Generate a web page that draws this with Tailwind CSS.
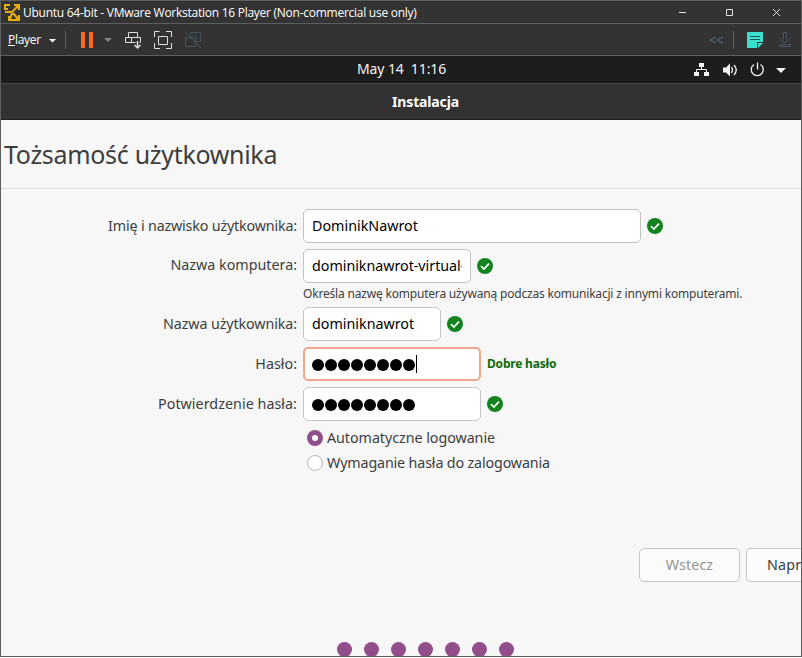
<!DOCTYPE html>
<html lang="pl">
<head>
<meta charset="utf-8">
<title>Instalacja</title>
<script src="https://cdn.jsdelivr.net/npm/@tailwindcss/browser@4"></script>
</head>
<body class="w-[802px] h-[658px] overflow-hidden bg-[#f7f7f7]">
<svg class="hidden">
  <symbol id="ok" viewBox="0 0 16 16"><circle cx="8" cy="8" r="8" fill="#12831f"/><path d="M4 8.2 6.9 11 12 5.600" fill="none" stroke="#fff" stroke-width="1.700"/></symbol>
</svg>
<div class="w-[802px] h-[657px] flex flex-col border border-[#5c5e60] overflow-hidden font-['Noto_Sans','Open_Sans',sans-serif] text-[#3d3d3d]">

  <header class="h-[22px] shrink-0 flex items-center bg-[#333333] text-white">
    <svg class="ml-[3px] mt-px w-4 h-[17px] shrink-0" viewBox="0 0 16 17" fill="none" stroke="#e8ae10" stroke-width="2">
      <path d="M1 6V1h5M10 1h5v5M15 11v5h-5M5 12v4h5M1 5l3 0M8 8l6-6M9 9l5 6M8 9l-2 6M1 8h7"/>
    </svg>
    <span class="ml-[3px] mt-px whitespace-nowrap font-['Open_Sans'] text-[12px] leading-[16px] tracking-[-0.26px]">Ubuntu 64-bit - VMware Workstation 16 Player (Non-commercial use only)</span>
    <svg class="ml-auto mr-[19px] w-[104px] h-[10px] shrink-0" viewBox="0 0 104 10" fill="none" stroke="#e0e0e0">
      <path d="M1 5.500h7M48.500 2.500h6v6h-6zM95 2l7 7M102 2l-7 7"/>
    </svg>
  </header>

  <nav class="h-[33px] shrink-0 flex items-center border-y border-[#5c5e60] bg-[#333333] text-white">
    <span class="ml-[7px] w-[34px] whitespace-nowrap font-['Open_Sans'] text-[12px] leading-[16px] tracking-[-0.3px]"><u>P</u>layer</span>
    <svg class="w-[170px] h-[30px] shrink-0" viewBox="42 24 170 30" fill="none" stroke="#dedede">
      <path d="M49 38h7l-3.500 3.500z" fill="#fff" stroke="none"/>
      <path d="M65.500 30v18" stroke="#606060"/>
      <path d="M81 31h4v16h-4zM89 31h4v16h-4z" fill="#ff6a1c" stroke="none"/>
      <path d="M104 37h8l-4 4z" fill="#858585" stroke="none"/>
      <path d="M128.500 31.500h9v5h-9zM125.500 36.500h6v5h-6zM131.500 36.500h9v5h-9z"/>
      <path d="M137.500 39v8M134.500 44l3 3 3-3" stroke="#333" stroke-width="4"/>
      <path d="M137.500 40v7M134.500 44l3 3 3-3" stroke-width="1.500"/>
      <path d="M158.500 35.500h9v8h-9zM154.500 36v-5.500h5M166 30.500h5.500V36M171.500 42v5.500H166M160 47.500h-5.500V42"/>
      <path d="M190.500 36v-4.500h10v9h-4.500M185.500 36.500h10v9h-10zM184.500 30.500l17 17" stroke="#43525f"/>
    </svg>
    <svg class="ml-auto w-[100px] h-[30px] shrink-0" viewBox="701 24 100 30" fill="none" stroke="#465868">
      <path d="M716 36l-6 3 6 3M723 36l-6 3 6 3" stroke-width="1.500"/>
      <path d="M733.500 30v18" stroke="#606060"/>
      <path d="M747 31h16v10h-6v6h-10z" fill="#3be0cc" stroke="none"/>
      <path d="M750 35.500h10M750 38.500h10" stroke="#24545a"/>
      <path d="M758 42h5l-5 5z" fill="#3be0cc" stroke="none"/>
      <path d="M783.500 38v-6.500h3V38M779.500 37l5.500 5 5.500-5M779.500 43.500h11v2h-11z"/>
    </svg>
  </nav>

  <div class="h-[28px] shrink-0 flex items-center border-b border-[#484848] bg-[#1d1d1d] text-[#f2f2f2]">
    <span class="ml-[356px] -mt-[2px] whitespace-pre text-[14px] leading-5 tracking-[-0.1px]">May 14  11:16</span>
    <svg class="ml-auto w-[110px] h-[26px] shrink-0" viewBox="691 56 110 26" fill="none" stroke="#f2f2f2">
      <path d="M699 62h5v4h-5zM694 71h5v4h-5zM704 71h5v4h-5z" fill="#f2f2f2" stroke="none"/>
      <path d="M701.500 66v2.500M696.500 71v-2.500h10V71"/>
      <path d="M723 66.500h3l4-4v13l-4-4h-3z" fill="#f2f2f2" stroke="none"/>
      <path d="M731.500 66q2 3 0 6M734 64q4.500 5 0 10" stroke-width="1.300"/>
      <path d="M754 63.500a6 6 0 1 0 6.500 0M757.500 61.500v7" stroke-width="1.300"/>
      <path d="M776 67h10l-5 5z" fill="#f2f2f2" stroke="none"/>
    </svg>
  </div>

  <div class="h-[36px] shrink-0 flex items-center justify-center border-b border-[#222] bg-[#333132] text-white">
    <h1 class="ml-[49px] mt-px text-[14px] leading-5 font-bold tracking-[-0.15px]">Instalacja</h1>
  </div>

  <main class="flex-1 min-h-0 bg-[#f7f7f7] text-[14.300px]">
    <div class="h-[69px] border-b border-[#dadada] pl-[3px] pt-[16px]">
      <h2 class="whitespace-nowrap text-[25px] leading-[36px] tracking-[-0.31px]">Tożsamość użytkownika</h2>
    </div>
    <form class="pt-[20px]">
      <div class="flex h-[40px] gap-[6px]">
        <label class="w-[296px] text-right leading-[33px] whitespace-nowrap tracking-[-0.17px]">Imię i nazwisko użytkownika:</label>
        <div class="w-[338px] h-[34px] rounded-[5px] border border-[#c3c3c3] bg-white px-2 leading-[32px] text-black">DominikNawrot</div>
        <svg class="mt-[9px] w-4 h-4"><use href="#ok"/></svg>
      </div>
      <div class="flex h-[35px] gap-[6px]">
        <label class="w-[296px] text-right leading-[32px] whitespace-nowrap">Nazwa komputera:</label>
        <div class="w-[168px] h-[34px] rounded-[5px] border border-[#c3c3c3] bg-white px-2 leading-[32px] text-black"><div class="overflow-hidden whitespace-nowrap w-[150px] tracking-[-0.03px]">dominiknawrot-virtual-</div></div>
        <svg class="mt-[9px] w-4 h-4"><use href="#ok"/></svg>
      </div>
      <p class="ml-[302px] h-[23px] text-[12px] leading-[20px] whitespace-nowrap tracking-[-0.19px]">Określa nazwę komputera używaną podczas komunikacji z innymi komputerami.</p>
      <div class="flex h-[40px] gap-[6px]">
        <label class="w-[296px] text-right leading-[33px] whitespace-nowrap tracking-[-0.1px]">Nazwa użytkownika:</label>
        <div class="w-[138px] h-[34px] rounded-[5px] border border-[#c3c3c3] bg-white px-2 leading-[32px] text-black">dominiknawrot</div>
        <svg class="mt-[9px] w-4 h-4"><use href="#ok"/></svg>
      </div>
      <div class="flex h-[40px] gap-[6px]">
        <label class="w-[296px] text-right leading-[33px] whitespace-nowrap">Hasło:</label>
        <div class="w-[178px] h-[34px] rounded-[5px] border-2 border-[#f3a68e] bg-white pl-[7px] flex items-center">
          <div class="flex gap-px mt-[2px]"><i class="w-[12px] h-[12px] rounded-full bg-black"></i><i class="w-[12px] h-[12px] rounded-full bg-black"></i><i class="w-[12px] h-[12px] rounded-full bg-black"></i><i class="w-[12px] h-[12px] rounded-full bg-black"></i><i class="w-[12px] h-[12px] rounded-full bg-black"></i><i class="w-[12px] h-[12px] rounded-full bg-black"></i><i class="w-[12px] h-[12px] rounded-full bg-black"></i><i class="w-[12px] h-[12px] rounded-full bg-black"></i></div>
          <i class="ml-px w-px h-[18px] bg-black"></i>
        </div>
        <span class="text-[12px] font-bold leading-[34px] tracking-[-0.2px] text-[#0b6b0b] whitespace-nowrap">Dobre hasło</span>
      </div>
      <div class="flex h-[40px] gap-[6px]">
        <label class="w-[296px] text-right leading-[33px] whitespace-nowrap tracking-[0.04px]">Potwierdzenie hasła:</label>
        <div class="w-[178px] h-[34px] rounded-[5px] border border-[#c3c3c3] bg-white pl-2 flex items-center">
          <div class="flex gap-px mt-[2px]"><i class="w-[12px] h-[12px] rounded-full bg-black"></i><i class="w-[12px] h-[12px] rounded-full bg-black"></i><i class="w-[12px] h-[12px] rounded-full bg-black"></i><i class="w-[12px] h-[12px] rounded-full bg-black"></i><i class="w-[12px] h-[12px] rounded-full bg-black"></i><i class="w-[12px] h-[12px] rounded-full bg-black"></i><i class="w-[12px] h-[12px] rounded-full bg-black"></i><i class="w-[12px] h-[12px] rounded-full bg-black"></i></div>
        </div>
        <svg class="mt-[9px] w-4 h-4"><use href="#ok"/></svg>
      </div>
      <div class="ml-[306px] flex h-[25px] gap-1 items-center leading-5 whitespace-nowrap -mt-[2px] tracking-[-0.05px]">
        <i class="w-4 h-4 rounded-full border-[5px] border-[#924d8b] bg-white"></i><span>Automatyczne logowanie</span>
      </div>
      <div class="ml-[306px] flex h-[25px] gap-1 items-center leading-5 whitespace-nowrap tracking-[-0.15px]">
        <i class="w-4 h-4 rounded-full border border-[#b8b8b8] bg-white"></i><span>Wymaganie hasła do zalogowania</span>
      </div>
      <div class="mt-[73px] ml-[638px] flex gap-[6px]">
        <div class="w-[101px] h-[34px] shrink-0 rounded-[5px] border border-[#c6c6c6] bg-[#fbfbfb] text-center leading-[32px] tracking-[0.1px] text-[#949494]">Wstecz</div>
        <div class="w-[55px] h-[34px] shrink-0 rounded-l-[5px] border border-r-0 border-[#c6c6c6] bg-[#fcfcfc] pl-[20px] leading-[32px] tracking-[0.15px]">Napr</div>
      </div>
      <div class="mt-[60px] ml-[336px] flex gap-3">
        <i class="w-[15px] h-[15px] rounded-full bg-[#924d8b]"></i><i class="w-[15px] h-[15px] rounded-full bg-[#924d8b]"></i><i class="w-[15px] h-[15px] rounded-full bg-[#924d8b]"></i><i class="w-[15px] h-[15px] rounded-full bg-[#924d8b]"></i><i class="w-[15px] h-[15px] rounded-full bg-[#924d8b]"></i><i class="w-[15px] h-[15px] rounded-full bg-[#924d8b]"></i><i class="w-[15px] h-[15px] rounded-full bg-[#924d8b]"></i>
      </div>
    </form>
  </main>
</div>
</body>
</html>
